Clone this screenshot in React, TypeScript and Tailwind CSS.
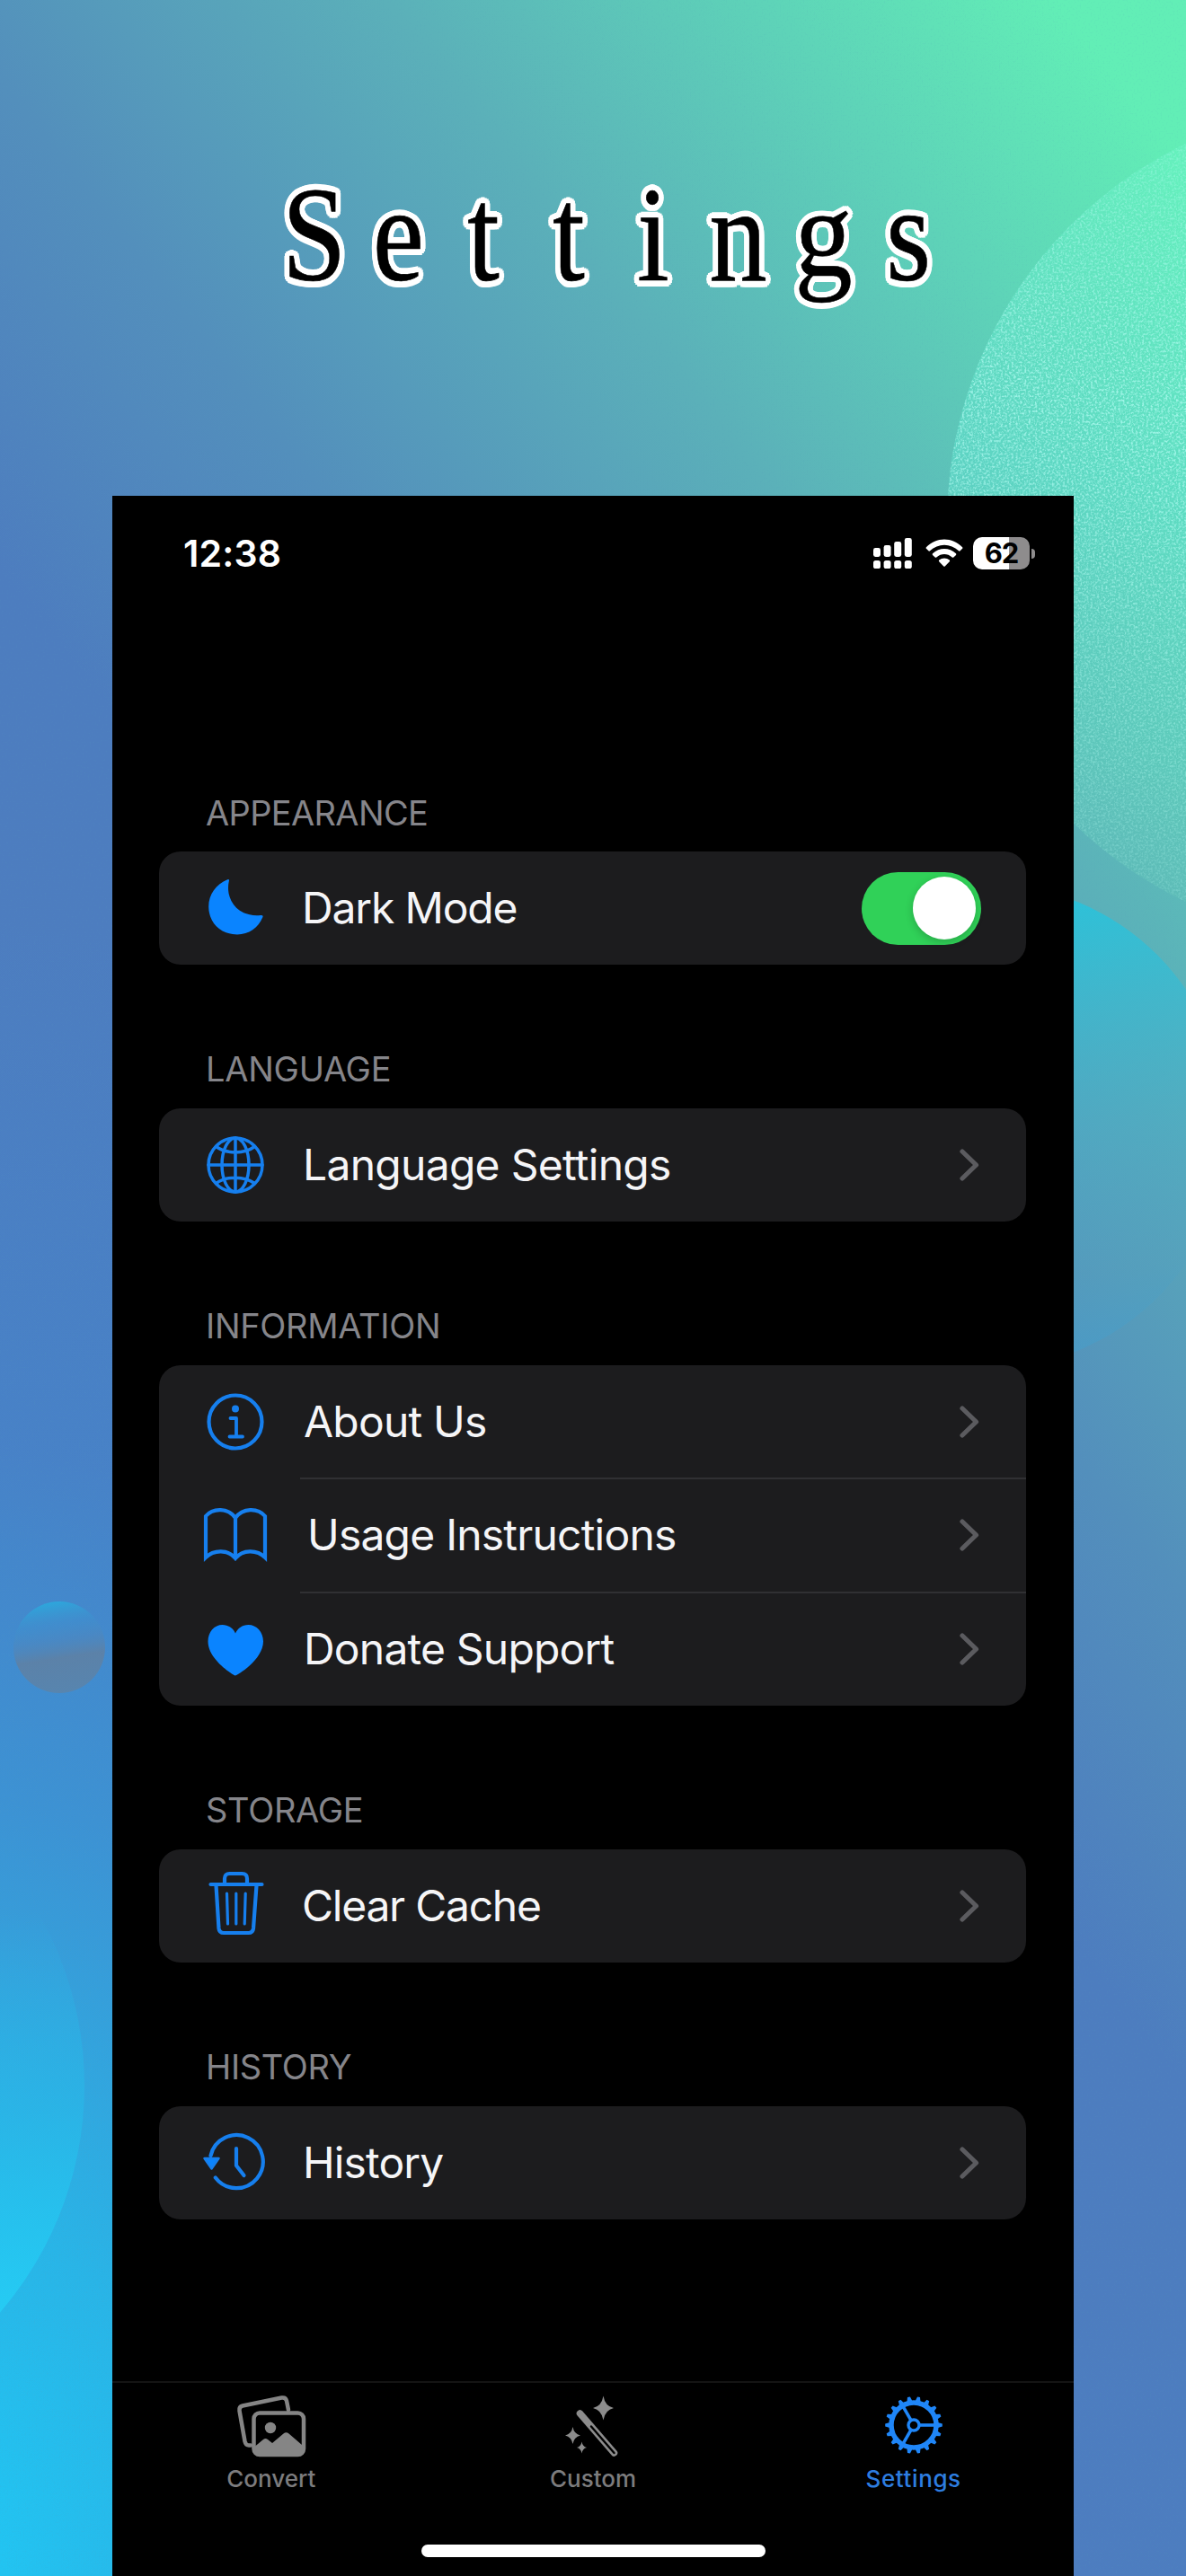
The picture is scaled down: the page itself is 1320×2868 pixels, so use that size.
import type { ReactNode } from 'react';

const BLUE = '#0a84ff';
const LINE_BLUE = '#167fee';

function Backdrop() {
  return (
    <svg className="absolute inset-0 h-[2868px] w-[1320px]" viewBox="0 0 1320 2868" aria-hidden="true">
      <defs>
        <linearGradient id="mint" gradientUnits="userSpaceOnUse" x1="1380" y1="160" x2="1240" y2="1010">
          <stop offset="0" stopColor="#6df7cb" stopOpacity="0.3" />
          <stop offset="0.45" stopColor="#5fe6d0" stopOpacity="0.45" />
          <stop offset="0.8" stopColor="#5fd3bd" stopOpacity="0.45" />
          <stop offset="1" stopColor="#62c3b4" stopOpacity="0.3" />
        </linearGradient>
        <linearGradient id="aqua" gradientUnits="userSpaceOnUse" x1="1170" y1="990" x2="1240" y2="1520">
          <stop offset="0" stopColor="#22c6e0" stopOpacity="0.85" />
          <stop offset="0.5" stopColor="#45b0cb" stopOpacity="0.4" />
          <stop offset="0.8" stopColor="#4fa0c4" stopOpacity="0.2" />
          <stop offset="1" stopColor="#3f9fd0" stopOpacity="0.55" />
        </linearGradient>
        <linearGradient id="cyan" gradientUnits="userSpaceOnUse" x1="0" y1="2130" x2="40" y2="2570">
          <stop offset="0" stopColor="#22c6f0" stopOpacity="0" />
          <stop offset="0.5" stopColor="#25bfec" stopOpacity="0.45" />
          <stop offset="1" stopColor="#25ccf4" stopOpacity="0.95" />
        </linearGradient>
        <linearGradient id="moonlet" x1="0.4" y1="0" x2="0.55" y2="1">
          <stop offset="0" stopColor="#27aee0" stopOpacity="0.85" />
          <stop offset="0.25" stopColor="#3c95cf" stopOpacity="0.3" />
          <stop offset="0.42" stopColor="#5585b4" stopOpacity="0.35" />
          <stop offset="0.62" stopColor="#6080a2" stopOpacity="0.85" />
          <stop offset="1" stopColor="#5a84ab" stopOpacity="0.9" />
        </linearGradient>
        <filter id="grain" x="0" y="0" width="100%" height="100%">
          <feTurbulence type="fractalNoise" baseFrequency="0.42" numOctaves="2" seed="4" />
          <feColorMatrix values="0 0 0 0 0.5  0 0 0 0 1  0 0 0 0 0.93  3.2 0 0 0 -1.4" />
          <feComposite in2="SourceGraphic" operator="in" />
        </filter>
        <filter id="fine" x="0" y="0" width="100%" height="100%">
          <feTurbulence type="fractalNoise" baseFrequency="0.5" numOctaves="2" seed="9" />
          <feColorMatrix values="0 0 0 0 0.1  0 0 0 0 0.35  0 0 0 0 0.5  1.6 0 0 0 -0.85" />
          <feComposite in2="SourceGraphic" operator="in" />
        </filter>
        <linearGradient id="fade" gradientUnits="userSpaceOnUse" x1="1320" y1="180" x2="1200" y2="980">
          <stop offset="0" stopColor="#fff" stopOpacity="0.35" />
          <stop offset="0.35" stopColor="#fff" stopOpacity="0.85" />
          <stop offset="1" stopColor="#fff" stopOpacity="0.25" />
        </linearGradient>
      </defs>
      <rect width="1320" height="2868" fill="#fff" filter="url(#fine)" opacity="0.22" />
      <circle cx="1097" cy="1254" r="270" fill="url(#aqua)" />
      <circle cx="1522" cy="582" r="468" fill="url(#mint)" />
      <circle cx="1522" cy="582" r="468" fill="url(#fade)" filter="url(#grain)" opacity="0.8" />
      <circle cx="-292" cy="2322" r="386" fill="url(#cyan)" />
      <circle cx="66" cy="1834" r="51" fill="url(#moonlet)" />
    </svg>
  );
}

function Title() {
  return (
    <h1 className="flex h-[552px] items-start pl-[302px] pt-[175px] font-['Liberation_Serif'] text-[150px] leading-[172px] text-black [text-shadow:7px_0_#fff,6.5px_2.7px_#fff,5px_5px_#fff,2.7px_6.5px_#fff,0_7px_#fff,-2.7px_6.5px_#fff,-5px_5px_#fff,-6.5px_2.7px_#fff,-7px_0_#fff,-6.5px_-2.7px_#fff,-5px_-5px_#fff,-2.7px_-6.5px_#fff,0_-7px_#fff,2.7px_-6.5px_#fff,5px_-5px_#fff,6.5px_-2.7px_#fff,3px_0_#fff,-3px_0_#fff,0_3px_#fff,0_-3px_#fff]">
      {'Settings'.split('').map((c, i) => (
        <span key={i} className="flex w-[94.5px] justify-center [-webkit-text-stroke:0.6px_black]">
          <span
            className={
              c === 'g'
                ? 'inline-block origin-[50%_40%] scale-x-[0.86] scale-y-[0.93]'
                : 'inline-block scale-x-[0.86]'
            }
          >
            {c}
          </span>
        </span>
      ))}
    </h1>
  );
}

function StatusBar() {
  return (
    <div className="flex h-[128px] items-center justify-between pl-[79px] pr-[43px]">
      <span className="text-[41px] font-semibold leading-none tracking-[0.2px] text-white">12:38</span>
      <div className="flex items-center">
        <svg className="h-[34px] w-[43px]" viewBox="0 0 43 34" fill="#fff">
          {[11, 8, 4, 0].map((y, i) => (
            <g key={i}>
              <rect x={i * 11.6} y={y} width="8" height={21 - y} rx="2.4" />
              <rect x={i * 11.6} y="25" width="8" height="9" rx="2.6" />
            </g>
          ))}
        </svg>
        <svg className="ml-[15px] h-[32px] w-[42px]" viewBox="0 0 42 32" fill="#fff">
          <path d="M0.9 9.2 C12 -2.4 30 -2.4 41.1 9.2 Q41.8 10 41.1 10.8 L38.6 13.3 Q37.8 14 37 13.3 C28 4.6 14 4.6 5 13.3 Q4.2 14 3.4 13.3 L0.9 10.8 Q0.2 10 0.9 9.2Z" />
          <path d="M8 16.3 C15.5 9.2 26.5 9.2 34 16.3 Q34.7 17.1 34 17.9 L31.3 20.5 Q30.5 21.2 29.7 20.5 C24.5 15.9 17.5 15.9 12.3 20.5 Q11.5 21.2 10.7 20.5 L8 17.9 Q7.3 17.1 8 16.3Z" />
          <path d="M15.2 23.6 C18.5 20.9 23.5 20.9 26.8 23.6 Q27.6 24.4 26.8 25.2 L21.7 30.5 Q21 31.2 20.3 30.5 L15.2 25.2 Q14.4 24.4 15.2 23.6Z" />
        </svg>
        <div className="ml-[11px] flex h-[36px] w-[63px] items-center justify-center rounded-[10px] bg-[linear-gradient(90deg,#fff_63%,#8e8c8d_63%)]">
          <span className="text-[31px] font-bold leading-[36px] tracking-[-1px] text-black">62</span>
        </div>
        <div className="ml-[2px] h-[11px] w-[4px] rounded-r-[4px] bg-[#8e8c8d]" />
      </div>
    </div>
  );
}

const Icon = ({ children }: { children: ReactNode }) => (
  <svg
    className="h-20 w-20 shrink-0"
    viewBox="0 0 80 80"
    fill="none"
    stroke={LINE_BLUE}
    strokeWidth="4.2"
    strokeLinecap="round"
    strokeLinejoin="round"
  >
    {children}
  </svg>
);

const MoonIcon = () => (
  <Icon>
    <path
      d="M31.2 8.2 Q33.6 7.5 32.8 10.2 C28.5 29 41.5 50.5 68 48 Q71.6 47.6 70.2 50.6 C65.5 62 55 69.5 42 69.5 C23.5 69.5 10.2 56 10.2 38.5 C10.2 24.5 18.5 13.5 31.2 8.2Z"
      fill={BLUE}
      stroke="none"
    />
  </Icon>
);
const GlobeIcon = () => (
  <Icon>
    <g strokeWidth="3.5">
      <circle cx="40" cy="40" r="30" />
      <ellipse cx="40" cy="40" rx="15" ry="30" />
      <path d="M40 10V70M10 40H70M18.5 19.5C30 28 50 28 61.5 19.5M18.5 60.5C30 52 50 52 61.5 60.5" />
    </g>
  </Icon>
);
const InfoIcon = () => (
  <Icon>
    <circle cx="40" cy="40" r="29.5" />
    <circle cx="40" cy="25.5" r="4" fill={LINE_BLUE} stroke="none" />
    <path d="M34.5 36H41V56M33.5 56.5H48" strokeWidth="3.8" />
  </Icon>
);
const BookIcon = () => (
  <Icon>
    <path
      d="M40 21C32 9.5 15 9.5 7 19V65C16 56 32 56 40 66C48 56 64 56 73 65V19C65 9.5 48 9.5 40 21ZM40 21V65"
      strokeLinejoin="miter"
    />
  </Icon>
);
const HeartIcon = () => (
  <Icon>
    <path
      d="M40 69.5C38.5 69.5 9.5 52 9.5 31.5C9.5 21 16.5 13 25.5 13C32.5 13 37.5 17 40 22.5C42.5 17 47.5 13 54.5 13C63.5 13 71 21 71 31.5C71 52 41.5 69.5 40 69.5Z"
      fill={BLUE}
      stroke="none"
    />
  </Icon>
);
const TrashIcon = () => (
  <Icon>
    <path d="M12.5 16H69.5" />
    <path d="M28 15V9.5Q28 4 33.5 4H47.5Q53 4 53 9.5V15" />
    <path d="M18.5 17L21.5 65Q22 70 27 70H54.5Q59.5 70 60 65L63.5 17" />
    <path d="M30.5 26L31.5 60M40.8 26V60M51.2 26L50.2 60" strokeWidth="3.2" />
  </Icon>
);
const HistoryIcon = () => (
  <Icon>
    <path d="M12.5 32A29.5 29.5 0 1 1 17.8 56.5" />
    <path d="M5.5 35H21.5L13.5 46.5Z" fill={BLUE} strokeWidth="2.5" />
    <path d="M41 24V43L49.5 54" />
  </Icon>
);

function Chevron() {
  return (
    <svg className="ml-auto mr-[51px] h-9 w-[24px]" viewBox="0 0 24 36" fill="none">
      <path d="M4 3L19.5 18L4 33" stroke="#5b5b5f" strokeWidth="5.2" strokeLinecap="round" strokeLinejoin="round" />
    </svg>
  );
}

function Toggle() {
  return (
    <div className="ml-auto mr-[50px] flex h-[81px] w-[133px] items-center justify-end rounded-full bg-[#30d158] pr-[6px]">
      <div className="size-[70px] rounded-full bg-white shadow-[0_3px_10px_rgba(0,0,0,0.2)]" />
    </div>
  );
}

type RowProps = { icon: ReactNode; label: string; fit: string; divider?: boolean; children?: ReactNode };

function Row({ icon, label, fit, divider, children }: RowProps) {
  return (
    <div className="relative flex h-[126.3px] items-center pl-[45px]">
      {icon}
      <span className={`whitespace-nowrap text-[48px] leading-none text-[#f5f5f7] ${fit}`}>{label}</span>
      {children ?? <Chevron />}
      {divider && <div className="absolute bottom-[-1px] left-[157px] right-0 h-[2px] bg-[#303033]" />}
    </div>
  );
}

function Section({ title, fit, children }: { title: string; fit: string; children: ReactNode }) {
  return (
    <section>
      <h2 className={`flex h-[86px] items-center pb-px pl-[52px] text-[38px] leading-none text-[#85858a] ${fit}`}>{title}</h2>
      <div className="rounded-[24px] bg-[#1c1c1e]">{children}</div>
    </section>
  );
}

const star = (x: number, y: number, rx: number, ry: number) =>
  `M${x} ${y - ry}Q${x + rx * 0.16} ${y - ry * 0.16} ${x + rx} ${y}Q${x + rx * 0.16} ${y + ry * 0.16} ${x} ${y + ry}Q${x - rx * 0.16} ${y + ry * 0.16} ${x - rx} ${y}Q${x - rx * 0.16} ${y - ry * 0.16} ${x} ${y - ry}Z`;

function ConvertIcon() {
  return (
    <svg
      className="h-[72px] w-[90px]"
      viewBox="0 0 90 72"
      fill="none"
      stroke="#858585"
      strokeWidth="4.5"
      strokeLinejoin="round"
      strokeLinecap="round"
    >
      <path d="M22 58.5H20Q16.5 58.5 15.5 54L9.5 20Q8.8 15.5 13 14.5L56.5 5.5Q61 4.8 62 9L64 19" />
      <rect x="25.5" y="22.5" width="55.5" height="46.5" rx="6.5" />
      <circle cx="44" cy="39" r="6.2" fill="#858585" stroke="none" />
      <path
        d="M27 59.5L36 52Q38.5 50 41 52L46 56L58.5 45.5Q61.5 43 64.5 45.5L79 58V64Q79 68 75 68H31Q27 68 27 64Z"
        fill="#858585"
        stroke="none"
      />
    </svg>
  );
}

function WandIcon() {
  return (
    <svg className="h-[72px] w-[70px]" viewBox="0 0 70 72" fill="#8c8c8c">
      <path d={star(46.5, 17, 11.5, 13.5)} />
      <path d={star(12.5, 47.5, 8.5, 9.5)} />
      <path d={star(22.5, 61, 5.5, 6.5)} />
      <path d="M20.5 23L58.5 67" stroke="#8c8c8c" strokeWidth="7.5" strokeLinecap="round" />
      <path d="M33 37.5L58.5 67" stroke="#000" strokeWidth="2.4" strokeLinecap="round" />
    </svg>
  );
}

function GearIcon() {
  return (
    <svg className="h-[72px] w-[70px]" viewBox="-35 -36 70 72" fill="none" stroke="#1f86f8">
      <circle r="25" strokeWidth="5.5" />
      {Array.from({ length: 18 }, (_, i) => (
        <path
          key={i}
          d="M26 -3.2L31.8 -1.5V1.5L26 3.2Z"
          fill="#1f86f8"
          stroke="none"
          transform={`rotate(${i * 20})`}
        />
      ))}
      <circle r="6" strokeWidth="3.4" />
      {[0, 120, 240].map((a) => (
        <path key={a} d="M7 0H24" strokeWidth="3.6" transform={`rotate(${a})`} />
      ))}
    </svg>
  );
}

function Tab({ icon, label, className }: { icon: ReactNode; label: string; className: string }) {
  return (
    <div className={`flex flex-col items-center text-[26px] font-medium leading-none ${className}`}>
      {icon}
      <span className="mt-[11px]">{label}</span>
    </div>
  );
}

export default function App() {
  return (
    <div className="relative h-[2868px] w-[1320px] overflow-hidden bg-[radial-gradient(1250px_1850px_at_-60px_2868px,#20c8f4_0%,rgba(36,188,236,0.88)_22%,rgba(50,160,224,0.6)_47%,rgba(60,140,215,0.32)_68%,rgba(70,130,205,0)_100%),linear-gradient(52deg,#4d7dc1_0%,#4d7dbf_49%,#538fbc_61%,#5bb0b9_75%,#5ed4b8_87%,#62eeb6_96%)] font-['Inter',sans-serif]">
      <Backdrop />
      <div className="relative">
        <Title />
        <div className="ml-[125px] flex h-[2316px] w-[1070px] flex-col bg-black">
          <StatusBar />
          <main className="mt-[182px] flex flex-col gap-[73.7px] pl-[52px] pr-[53px]">
            <Section title="APPEARANCE" fit="tracking-[-0.65px]">
              <Row icon={<MoonIcon />} label="Dark Mode" fit="ml-[34px] tracking-[-1.15px]">
                <Toggle />
              </Row>
            </Section>
            <Section title="LANGUAGE" fit="tracking-[-0.26px]">
              <Row icon={<GlobeIcon />} label="Language Settings" fit="ml-[35px] tracking-[-0.72px]" />
            </Section>
            <Section title="INFORMATION" fit="tracking-[-0.3px]">
              <Row icon={<InfoIcon />} label="About Us" fit="ml-[36px] tracking-[-0.8px]" divider />
              <Row icon={<BookIcon />} label="Usage Instructions" fit="ml-[40px] tracking-[-0.8px]" divider />
              <Row icon={<HeartIcon />} label="Donate Support" fit="ml-[36px] tracking-[-0.8px]" />
            </Section>
            <Section title="STORAGE" fit="tracking-[-0.3px]">
              <Row icon={<TrashIcon />} label="Clear Cache" fit="ml-[34px] tracking-[-1.25px]" />
            </Section>
            <Section title="HISTORY" fit="tracking-[-0.35px]">
              <Row icon={<HistoryIcon />} label="History" fit="ml-[35px] tracking-[-0.87px]" />
            </Section>
          </main>
          <nav className="mt-auto h-[217px] border-t-2 border-[#141414]">
            <div className="grid grid-cols-3 pt-[11px]">
              <Tab icon={<ConvertIcon />} label="Convert" className="-ml-[3px] text-[#7c7c7e]" />
              <Tab icon={<WandIcon />} label="Custom" className="text-[#7c7c7e]" />
              <Tab icon={<GearIcon />} label="Settings" className="tracking-[0.6px] text-[#2d7de0]" />
            </div>
            <div className="mx-auto mt-[60px] h-[14px] w-[383px] rounded-full bg-white" />
          </nav>
        </div>
      </div>
    </div>
  );
}
